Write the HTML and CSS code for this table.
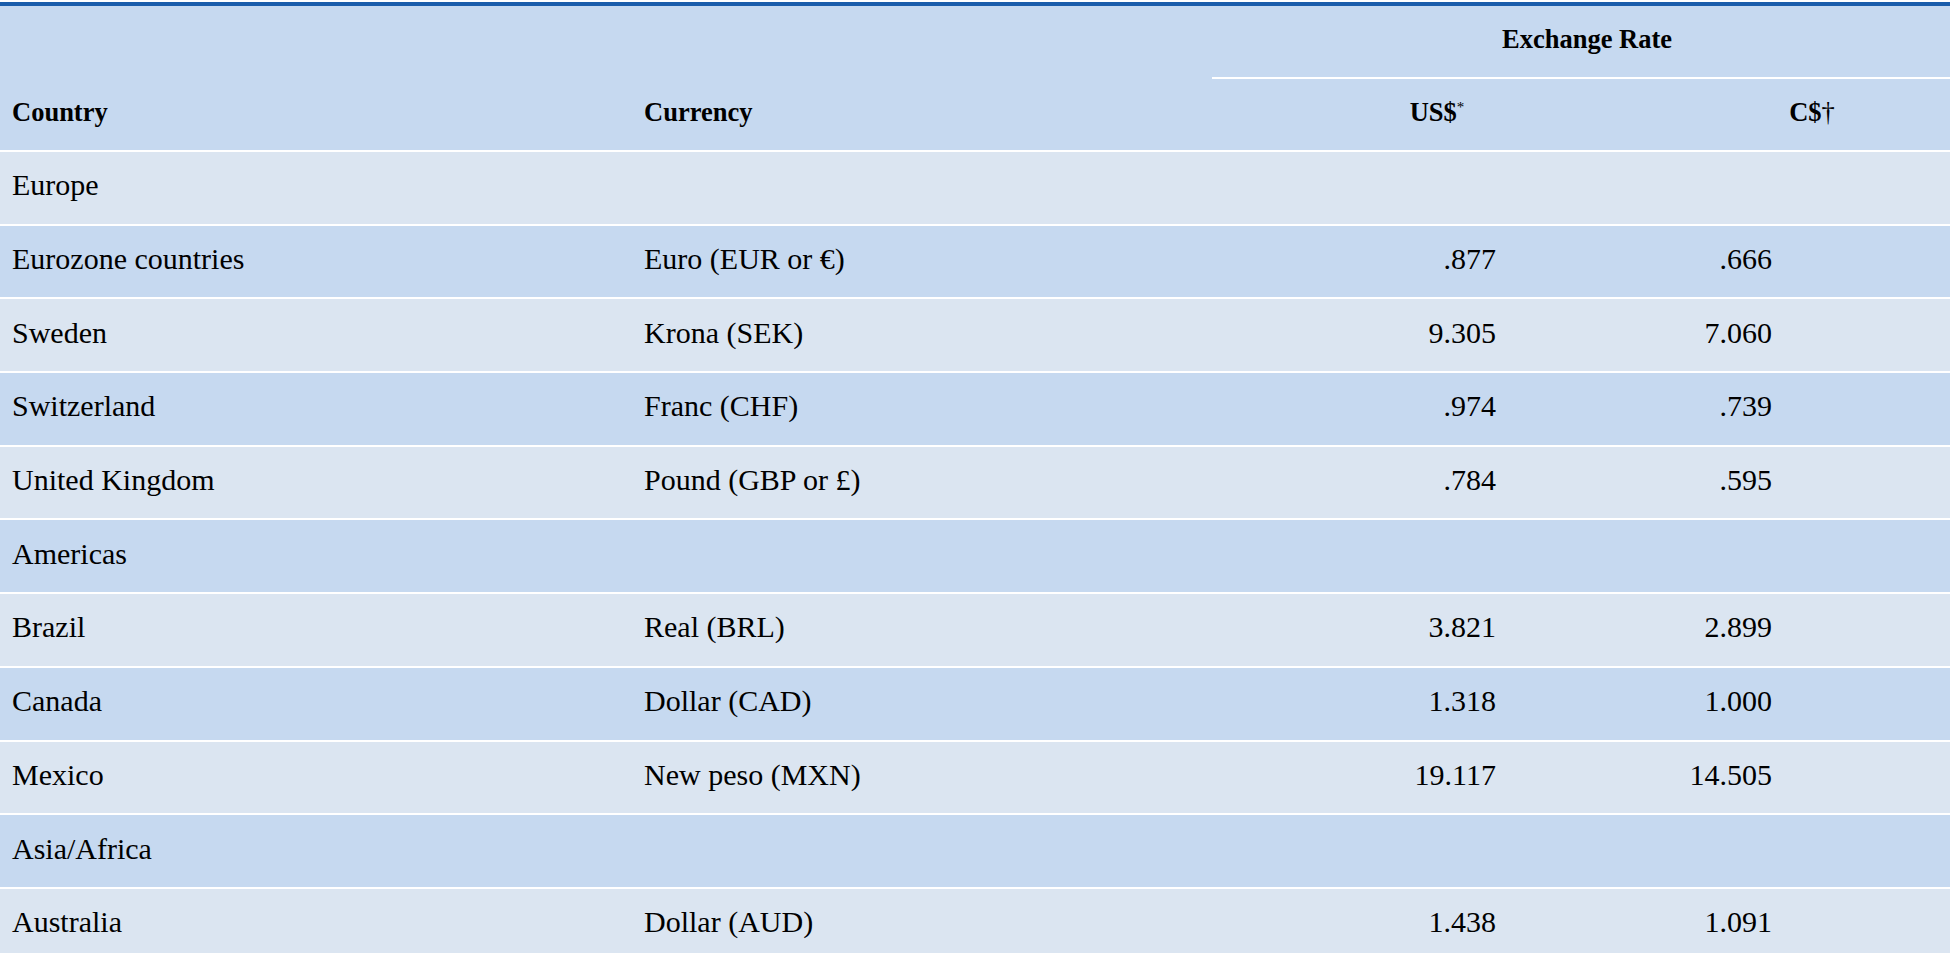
FILE: index.html
```html
<!DOCTYPE html>
<html lang="en">
<head>
<meta charset="utf-8">
<title>Exchange Rates</title>
<link rel="stylesheet" href="styles.css">
</head>
<body>
<div class="frame">
<table class="rates">
  <colgroup>
    <col class="c-country">
    <col class="c-currency">
    <col class="c-usd">
    <col class="c-cad">
  </colgroup>
  <thead>
    <tr class="head-top">
      <th></th>
      <th></th>
      <th colspan="2" class="group">Exchange Rate</th>
    </tr>
    <tr class="head-sub">
      <th class="left">Country</th>
      <th class="left">Currency</th>
      <th class="mid">US$<sup class="mark">*</sup></th>
      <th class="mid">C$<span class="dagger">†</span></th>
    </tr>
  </thead>
  <tbody>
    <tr class="light region"><td>Europe</td><td></td><td></td><td></td></tr>
    <tr class="dark"><td>Eurozone countries</td><td>Euro (EUR or €)</td><td class="num usd">.877</td><td class="num cad">.666</td></tr>
    <tr class="light"><td>Sweden</td><td>Krona (SEK)</td><td class="num usd">9.305</td><td class="num cad">7.060</td></tr>
    <tr class="dark"><td>Switzerland</td><td>Franc (CHF)</td><td class="num usd">.974</td><td class="num cad">.739</td></tr>
    <tr class="light"><td>United Kingdom</td><td>Pound (GBP or £)</td><td class="num usd">.784</td><td class="num cad">.595</td></tr>
    <tr class="dark region"><td>Americas</td><td></td><td></td><td></td></tr>
    <tr class="light"><td>Brazil</td><td>Real (BRL)</td><td class="num usd">3.821</td><td class="num cad">2.899</td></tr>
    <tr class="dark"><td>Canada</td><td>Dollar (CAD)</td><td class="num usd">1.318</td><td class="num cad">1.000</td></tr>
    <tr class="light"><td>Mexico</td><td>New peso (MXN)</td><td class="num usd">19.117</td><td class="num cad">14.505</td></tr>
    <tr class="dark region"><td>Asia/Africa</td><td></td><td></td><td></td></tr>
    <tr class="light"><td>Australia</td><td>Dollar (AUD)</td><td class="num usd">1.438</td><td class="num cad">1.091</td></tr>
  </tbody>
</table>
</div>
</body>
</html>
```

FILE: styles.css
```css
html, body {
  margin: 0;
  padding: 0;
  background: #ffffff;
  overflow: hidden;
}

.frame {
  padding-top: 2px;
  width: 1950px;
  overflow: hidden;
}

.rates {
  width: 1962px;
  table-layout: fixed;
  border-collapse: separate;
  border-spacing: 0;
  border-top: 4px solid #1a5dab;
  font-family: "Liberation Serif", "Times New Roman", serif;
  color: #000000;
}

.c-country { width: 632px; }
.c-currency { width: 580px; }
.c-usd { width: 450px; }
.c-cad { width: 300px; }

.rates th,
.rates td {
  box-sizing: border-box;
  padding: 0 0 0 12px;
  vertical-align: middle;
  white-space: nowrap;
}

.rates thead th {
  background: #c6d9f0;
  font-weight: bold;
  font-size: 26.5px;
  line-height: 32px;
}

.head-top th {
  height: 73px;
  padding-bottom: 6px;
}

.head-top .group {
  text-align: center;
  padding: 0 0 6px 0;
  border-bottom: 2px solid #ffffff;
}

.head-sub th {
  height: 71px;
  padding-bottom: 6px;
}

.rates th.left {
  text-align: left;
}

.rates th.mid {
  text-align: center;
  padding-left: 0;
}

.mark {
  font-size: 15px;
  font-weight: normal;
  vertical-align: 9px;
  line-height: 0;
}

.dagger {
  font-weight: normal;
}

.rates tbody td {
  height: 73.7px;
  border-top: 2px solid #ffffff;
  padding-bottom: 5px;
  font-size: 30px;
  line-height: 34px;
}

.light td { background: #dbe5f1; }
.dark td { background: #c6d9f0; }

.rates td.num {
  text-align: right;
  padding-left: 0;
}

.rates td.usd { padding-right: 166px; }
.rates td.cad { padding-right: 190px; }
```
